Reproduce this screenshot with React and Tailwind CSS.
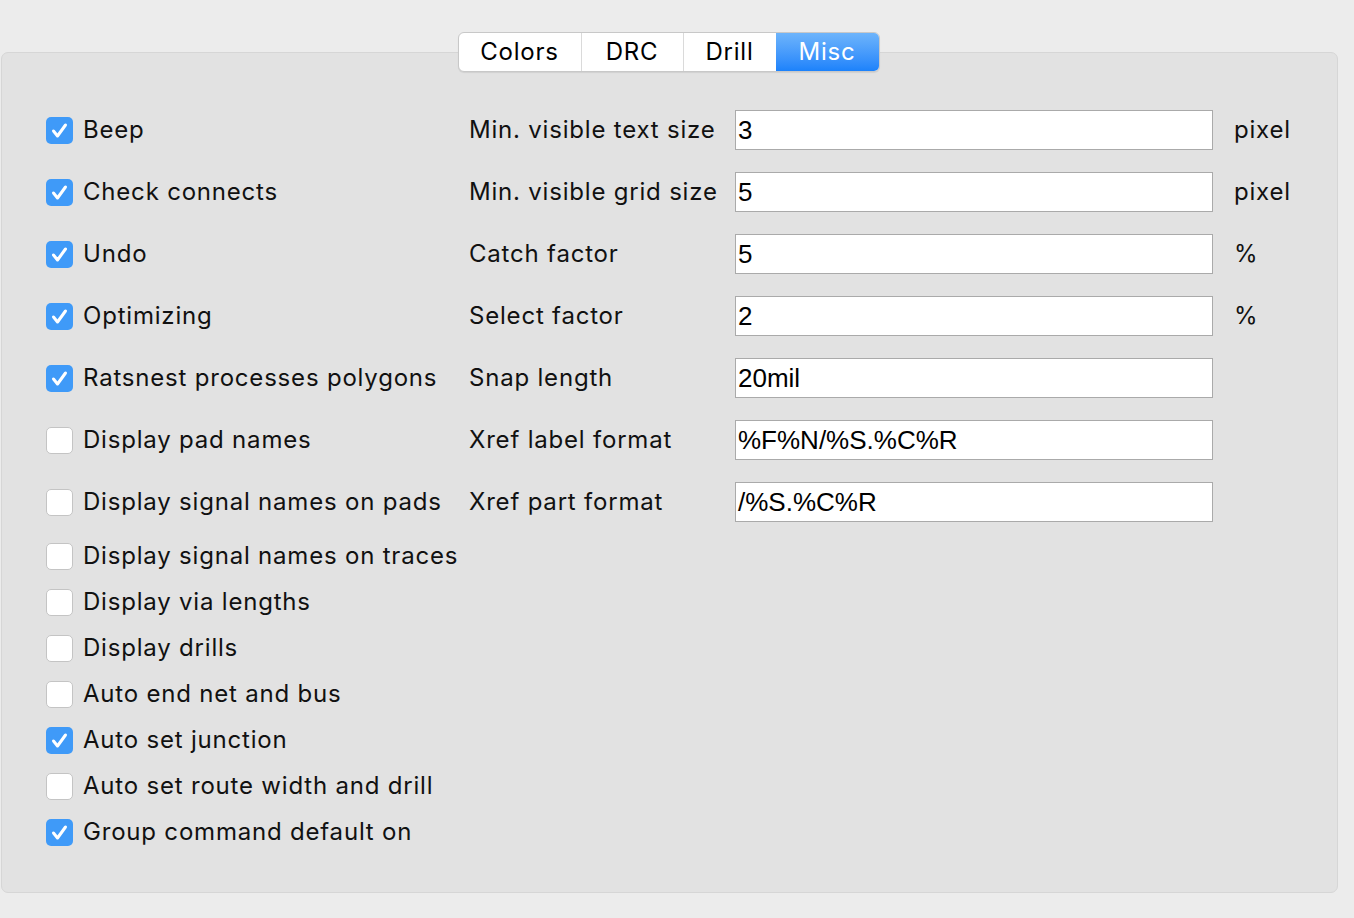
import React from 'react';

const fields = [
    { label: 'Min. visible text size', value: '3', unit: 'pixel' },
    { label: 'Min. visible grid size', value: '5', unit: 'pixel' },
    { label: 'Catch factor', value: '5', unit: '%' },
    { label: 'Select factor', value: '2', unit: '%' },
    { label: 'Snap length', value: '20mil', unit: '' },
    { label: 'Xref label format', value: '%F%N/%S.%C%R', unit: '' },
    { label: 'Xref part format', value: '/%S.%C%R', unit: '' },
];

const topChecks = [
    { label: 'Beep', on: true },
    { label: 'Check connects', on: true },
    { label: 'Undo', on: true },
    { label: 'Optimizing', on: true },
    { label: 'Ratsnest processes polygons', on: true },
    { label: 'Display pad names', on: false },
    { label: 'Display signal names on pads', on: false },
];

const bottomChecks = [
    { label: 'Display signal names on traces', on: false },
    { label: 'Display via lengths', on: false },
    { label: 'Display drills', on: false },
    { label: 'Auto end net and bus', on: false },
    { label: 'Auto set junction', on: true },
    { label: 'Auto set route width and drill', on: false },
    { label: 'Group command default on', on: true },
];

const tabs = [
    { name: 'Colors', w: 'w-[122px]' },
    { name: 'DRC', w: 'w-[102px]' },
    { name: 'Drill', w: 'w-[93px]' },
    { name: 'Misc', w: 'w-[103px]' },
];

function Checkbox({ on }) {
    if (on) {
        return (
            <span className="w-[27px] h-[27px] rounded-[5px] bg-[#3f9af8] flex items-center justify-center shrink-0">
                <svg width="27" height="27" viewBox="0 0 27 27">
                    <path d="M7.5 14 L11.5 19 L19.5 8" fill="none" stroke="white" strokeWidth="3" strokeLinecap="round" strokeLinejoin="round" />
                </svg>
            </span>
        );
    }
    return <span className="w-[27px] h-[27px] rounded-[5px] bg-white border border-[#c4c4c4] shrink-0" />;
}

function CheckRow({ label, on, h }) {
    return (
        <div className={`flex items-center gap-[10px] ${h}`}>
            <Checkbox on={on} />
            <span className="whitespace-nowrap">{label}</span>
        </div>
    );
}

export default function App() {
    return (
        <div
            className="w-[1354px] h-[918px] bg-[#ececec] pt-[32px] pl-[1px] text-[24px] tracking-[0.8px] text-[#111]"
            style={{ fontFamily: 'Inter, "Liberation Sans", Arial, sans-serif' }}
        >
            <div className="w-[1335px] flex justify-center relative z-10">
                <div className="flex h-[40px] rounded-[6px] border border-[#c8c8c8] bg-white overflow-hidden shadow-[0_1px_1px_rgba(0,0,0,0.08)]">
                    {tabs.map((t, i) => (
                        <div
                            key={t.name}
                            className={`${t.w} flex items-center justify-center ${
                                t.name === 'Misc'
                                    ? 'bg-gradient-to-b from-[#6db4fb] to-[#1b82fb] text-white'
                                    : 'text-black'
                            } ${i > 0 && t.name !== 'Misc' ? 'border-l border-[#dadada]' : ''}`}
                        >
                            {t.name}
                        </div>
                    ))}
                </div>
            </div>

            <div className="w-[1337px] h-[841px] -mt-[20px] bg-[#e2e2e2] border border-[#d6d6d6] rounded-[7px] pt-[46px] pl-[44px]">
                <div className="flex">
                    <div className="w-[423px] flex flex-col">
                        {topChecks.map((c) => (
                            <CheckRow key={c.label} label={c.label} on={c.on} h="h-[62px]" />
                        ))}
                    </div>
                    <div className="flex flex-col">
                        {fields.map((f) => (
                            <div key={f.label} className="h-[62px] flex items-center">
                                <span className="w-[266px] whitespace-nowrap">{f.label}</span>
                                <div
                                    className="w-[478px] h-[40px] bg-white border border-[#aaaaaa] flex items-center pl-[2px] text-[26px] tracking-normal text-black"
                                    style={{ fontFamily: '"Liberation Sans", Arial, sans-serif' }}
                                >
                                    {f.value}
                                </div>
                                <span className="ml-[21px]">{f.unit}</span>
                            </div>
                        ))}
                    </div>
                </div>
                <div className="flex flex-col">
                    {bottomChecks.map((c) => (
                        <CheckRow key={c.label} label={c.label} on={c.on} h="h-[46px]" />
                    ))}
                </div>
            </div>
        </div>
    );
}
